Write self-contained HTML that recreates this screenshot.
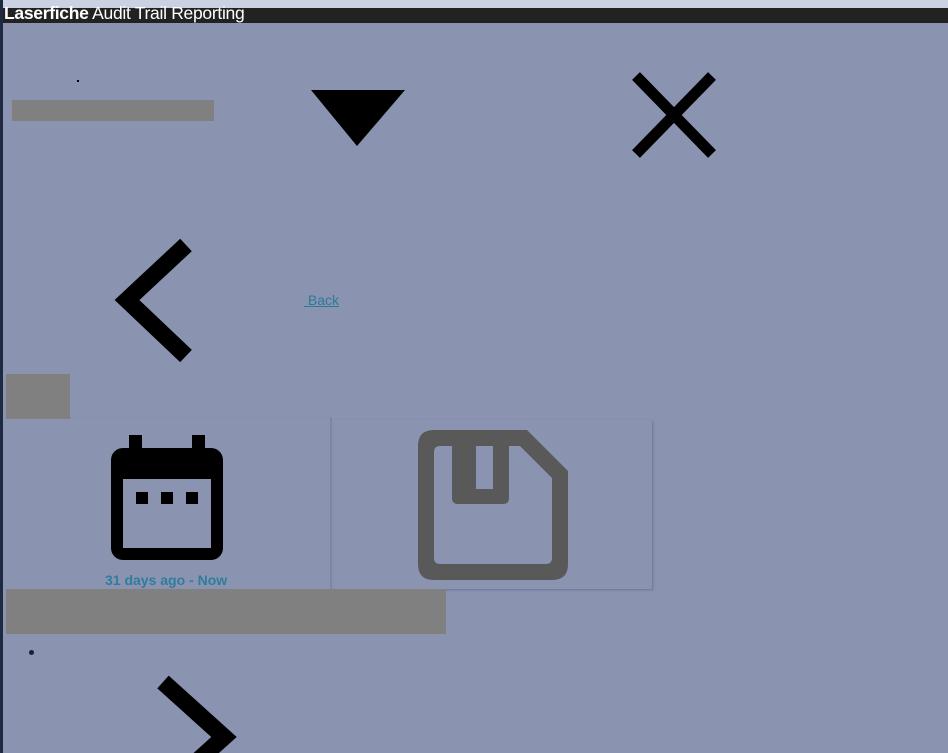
<!DOCTYPE html>
<html><head><meta charset="utf-8"><style>
*{margin:0;padding:0;box-sizing:border-box}
html,body{width:948px;height:753px;overflow:hidden}
body{background:#8a93b0;position:relative;font-family:"Liberation Sans",sans-serif}
.a{position:absolute}
.g{position:absolute;background:#808080}
</style></head><body>
<div class="a" style="left:0;top:0;width:948px;height:8px;background:#c9d1e2"></div>
<div class="a" style="left:0;top:0;width:3px;height:753px;background:#1e2a40"></div>
<div class="a" style="left:3px;top:8px;width:945px;height:15px;background:#222"></div>
<div class="a" style="left:4px;top:2px;color:#fff;font-size:17.5px;line-height:22px;letter-spacing:-0.3px;white-space:nowrap"><b>Laserfiche</b> Audit Trail Reporting</div>
<div class="a" style="left:77px;top:80px;width:2px;height:2px;background:#000"></div>
<div class="g" style="left:12px;top:100px;width:202px;height:21px"></div>
<svg class="a" style="left:0;top:0" width="948" height="753">
<polygon points="311,90 405,90 357,146" fill="#000"/>
<path d="M636,76 L712,154 M712,76 L636,154" stroke="#000" stroke-width="11" fill="none"/>
<path d="M186,245 L127,300 L186,356" stroke="#000" stroke-width="17" fill="none"/>
<path d="M163,682 L224,737 L163,792" stroke="#000" stroke-width="17" fill="none"/>
</svg>
<a class="a" style="left:304px;top:292px;font-size:14px;color:#2b7a9a;text-decoration:underline">&nbsp;Back</a>
<div class="a" style="left:60px;top:378px;font-size:13px;color:#223">t</div>
<div class="a" style="left:6px;top:417px;width:326px;height:172px;border-right:2px solid #7d86a3;border-top:1px solid #8590ad"></div>
<div class="a" style="left:334px;top:420px;width:318px;height:169px;box-shadow:1px 1px 2px #6a7390"></div>
<div class="g" style="left:6px;top:374px;width:64px;height:45px"></div>
<svg class="a" style="left:0;top:0" width="948" height="753">
<rect x="129" y="435" width="13" height="14" fill="#000"/>
<rect x="192" y="435" width="13" height="14" fill="#000"/>
<rect x="111" y="448" width="112" height="112" rx="12" fill="#000"/>
<rect x="123" y="479" width="88" height="69" fill="#8a93b0"/>
<rect x="136" y="492" width="12" height="12" fill="#000"/>
<rect x="161" y="492" width="12" height="12" fill="#000"/>
<rect x="186" y="492" width="12" height="12" fill="#000"/>
<path d="M434,430 L527,430 L568,471 L568,564 Q568,580 552,580 L434,580 Q418,580 418,564 L418,446 Q418,430 434,430 Z M440,446 Q434,446 434,452 L434,558 Q434,564 440,564 L546,564 Q552,564 552,558 L552,478 L520,446 L509,446 L509,498 Q509,504 503,504 L458,504 Q452,504 452,498 L452,446 Z M476,446 L476,489 L493,489 L493,446 Z" fill="#595959" fill-rule="evenodd"/>
</svg>
<div class="a" style="left:105px;top:572px;font-size:14px;font-weight:bold;color:#2f7d9c;white-space:nowrap">31 days ago - Now</div>
<div class="g" style="left:6px;top:589px;width:440px;height:45px"></div>
<div class="a" style="left:29px;top:650px;width:5px;height:5px;border-radius:50%;background:#1a2030"></div>
</body></html>
